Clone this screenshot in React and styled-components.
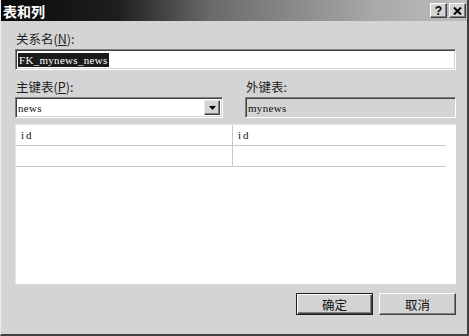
import styled, { createGlobalStyle } from 'styled-components';

const GlobalStyle = createGlobalStyle`
  html, body {
    margin: 0;
    padding: 0;
    background: #d4d4d4;
  }
  * {
    box-sizing: border-box;
  }
`;

const cjk = `"Noto Sans CJK SC", "Liberation Sans", sans-serif`;
// the dialog's data text is an old slab-serif monospace; a serif gets close
const typewriter = `"Liberation Serif", "DejaVu Serif", serif`;

export default function App() {
  return (
    <>
      <GlobalStyle />
      <Window>
        <TitleBar>
          <Title>表和列</Title>
          <TitleButtons>
            <CaptionButton aria-label="帮助">?</CaptionButton>
            <CaptionButton aria-label="关闭">
              <svg width="9" height="8" viewBox="0 0 9 8">
                <path d="M1 0.5 L8 7.5 M8 0.5 L1 7.5" stroke="#000" strokeWidth="2" />
              </svg>
            </CaptionButton>
          </TitleButtons>
        </TitleBar>

        <Body>
          <Label>关系名(<u>N</u>):</Label>
          <Field>
            <Selected>FK_mynews_news</Selected>
          </Field>

          <TableRow>
            <Column $width={209}>
              <Label>主键表(<u>P</u>):</Label>
              <Field>
                news
                <DropButton>
                  <svg width="7" height="4" viewBox="0 0 7 4">
                    <path d="M0 0 H7 L3.5 4 Z" fill="#000" />
                  </svg>
                </DropButton>
              </Field>
            </Column>
            <Column $width={212}>
              <Label>外键表:</Label>
              <Field $readOnly>mynews</Field>
            </Column>
          </TableRow>

          <Grid>
            <GridRow>
              <Cell>id</Cell>
              <Cell>id</Cell>
            </GridRow>
            <GridRow>
              <Cell />
              <Cell />
            </GridRow>
          </Grid>

          <Actions>
            <DialogButton $default>确定</DialogButton>
            <DialogButton>取消</DialogButton>
          </Actions>
        </Body>
      </Window>
    </>
  );
}

const Window = styled.div`
  width: 469px;
  height: 336px;
  display: flex;
  flex-direction: column;
  background: #d4d4d4;
  border-left: 1px solid #ececec;
  border-right: 2px solid #404040;
  border-bottom: 2px solid #404040;
`;

const TitleBar = styled.div`
  height: 21px;
  display: flex;
  align-items: center;
  justify-content: space-between;
  padding: 0 1px 0 2px;
  background: linear-gradient(
    to right,
    #0a0a0a 0%,
    #1e1e1e 25%,
    #6a6a6a 45%,
    #a8a8a8 80%,
    #bebebe 100%
  );
`;

const Title = styled.span`
  font-family: ${cjk};
  font-size: 14px;
  font-weight: 700;
  color: #ffffff;
  line-height: 1;
`;

const TitleButtons = styled.div`
  display: flex;
  gap: 2px;
`;

const CaptionButton = styled.button`
  width: 17px;
  height: 15px;
  padding: 0;
  display: flex;
  align-items: center;
  justify-content: center;
  font-family: "Liberation Sans", sans-serif;
  font-size: 12px;
  font-weight: 700;
  color: #000;
  background: #d4d4d4;
  border: 1px solid;
  border-color: #ffffff #404040 #404040 #ffffff;
  box-shadow: inset -1px -1px #808080;
`;

const Body = styled.div`
  flex: 1;
  display: flex;
  flex-direction: column;
  padding: 9px 11px 0 14px;
`;

const Label = styled.div`
  font-family: ${cjk};
  font-size: 12.5px;
  line-height: 18px;
  color: #1e1e1e;
  margin-bottom: 1px;
  padding-left: 1px;

  u {
    text-decoration: underline;
  }
`;

const Field = styled.div`
  position: relative;
  height: 21px;
  display: flex;
  align-items: center;
  padding: 0 2px;
  font-family: ${typewriter};
  font-size: 11px;
  letter-spacing: 0.3px;
  color: #111;
  background: ${(p) => (p.$readOnly ? '#d4d4d4' : '#ffffff')};
  border: 1px solid;
  border-color: #808080 #ffffff #ffffff #808080;
  box-shadow: inset 1px 1px #404040, inset -1px -1px #d4d4d4;
`;

const Selected = styled.span`
  background: #1a1a1a;
  color: #ffffff;
  padding: 0 1px;
  line-height: 14px;
`;

const DropButton = styled.span`
  position: absolute;
  right: 2px;
  top: 2px;
  width: 16px;
  height: 15px;
  display: flex;
  align-items: center;
  justify-content: center;
  background: #d4d4d4;
  border: 1px solid;
  border-color: #e8e8e8 #404040 #404040 #e8e8e8;
  box-shadow: inset -1px -1px #808080;
`;

const TableRow = styled.div`
  display: flex;
  gap: 22px;
  margin-top: 8px;
`;

const Column = styled.div`
  width: ${(p) => p.$width}px;
  display: flex;
  flex-direction: column;
`;

const Grid = styled.div`
  margin-top: 6px;
  height: 160px;
  background: #ffffff;
  border-left: 1px solid #e6e6e6;
  border-top: 1px solid #e6e6e6;
  padding-right: 10px;
`;

const GridRow = styled.div`
  display: grid;
  grid-template-columns: 216px 216px;
  height: 21px;
  border-bottom: 1px solid #c8c8c8;
`;

const Cell = styled.div`
  display: flex;
  align-items: center;
  padding-left: 5px;
  font-family: ${typewriter};
  font-size: 11px;
  letter-spacing: 2px;
  color: #111;

  & + & {
    border-left: 1px solid #c8c8c8;
  }
`;

const Actions = styled.div`
  display: flex;
  justify-content: flex-end;
  gap: 6px;
  margin-top: 9px;
`;

const DialogButton = styled.button`
  width: 77px;
  height: 22px;
  padding: 0;
  font-family: ${cjk};
  font-size: 12.5px;
  color: #111;
  background: #d4d4d4;
  border: 1px solid;
  border-color: ${(p) =>
    p.$default ? '#202020' : '#ffffff #404040 #404040 #ffffff'};
  box-shadow: ${(p) =>
    p.$default
      ? 'inset 1px 1px #ffffff, inset -1px -1px #404040, inset -2px -2px #808080'
      : 'inset -1px -1px #808080'};
`;
